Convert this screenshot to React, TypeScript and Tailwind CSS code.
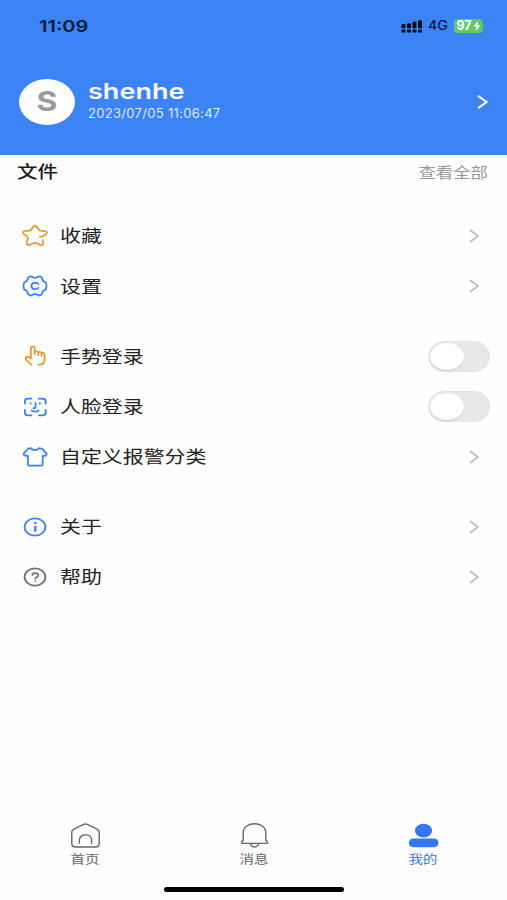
import React, { useState } from 'react';

interface IconProps {
    children: React.ReactNode;
    className?: string;
}

const RowIcon: React.FC<IconProps> = ({ children, className = 'text-[#3b82f0]' }) => (
    <svg
        viewBox="0 0 28 24"
        fill="none"
        stroke="currentColor"
        strokeWidth="1.8"
        strokeLinecap="round"
        strokeLinejoin="round"
        className={`w-7 h-6 shrink-0 ${className}`}
    >
        {children}
    </svg>
);

const StarIcon = () => (
    <RowIcon className="text-[#e59a35]">
        <path d="M18.8 12.7H21.4L24.9 10.2C26.8 8.6 26 7.4 24 7.2L19.4 6.6Q18.4 6.4 17.8 5.6L15.6 2.6Q14 0.9 12.4 2.6L10.2 5.6Q9.6 6.4 8.6 6.6L4 7.2C2 7.4 1.2 8.6 3.1 10.2L6.2 12.6Q7 13.3 6.8 14.2L5.9 18.6C5.6 20.8 6.8 21.6 8.8 20.8L13 19Q14 18.6 15 19L19.2 20.8C21.2 21.6 22.4 20.8 22.1 18.6L21.6 16.2" />
    </RowIcon>
);

const SettingsIcon = () => (
    <RowIcon>
        <path d="M10.3 2.6Q14 5.2 17.7 2.6Q19.4 2 21.1 3.8Q21 7.2 24.7 8.4Q25.5 10 25.5 12Q25.5 14 24.7 15.6Q21 16.8 21.1 19.8Q19.4 22 17.7 21.4Q14 18.8 10.3 21.4Q8.6 22 6.9 19.8Q7 16.8 3.3 15.6Q2.5 14 2.5 12Q2.5 10 3.3 8.4Q7 7.2 6.9 3.8Q8.6 2 10.3 2.6Z" />
        <path d="M17.4 10C15.5 8 10.4 8.5 10.4 12C10.4 15.5 15.5 16 17.4 14" />
    </RowIcon>
);

const HandIcon = () => (
    <RowIcon className="text-[#e59a35]">
        <path d="M10.3 20.7L5.3 16.2Q4 14 5.5 12.9Q7.1 12.2 9.9 14.5V4Q10 2.3 11.7 2.3Q13.5 2.3 13.6 4V10.2M13.6 7.7Q17.2 6.7 17.3 9V11.2M17.3 8.3Q20.5 7.2 20.6 9.8V11.8M20.6 9Q23.6 8.4 23.6 11.2V16Q23.6 20.7 17.6 20.7" />
    </RowIcon>
);

const FaceIcon = () => (
    <RowIcon>
        <path d="M10.4 3.7H7Q3.9 3.7 3.9 6.2V8.6M17.8 3.7H21Q24.7 3.7 24.7 6.2V8.6M3.9 15V17.8Q3.9 20.4 7 20.4H10.4M17.8 20.4H21Q24.7 20.4 24.7 17.8V15" />
        <path d="M9.6 8.2V8.7M18.9 8.2V8.7M14.5 8V12.1Q14.5 13.3 12.5 13.2M10.7 15.5Q14.2 17.8 17.7 15.5" />
    </RowIcon>
);

const ShirtIcon = () => (
    <RowIcon>
        <path d="M9.7 3.2Q14 6.8 18.4 3.2L21.1 3.9L25.7 8.6Q25.9 11 21.7 11V19Q21.6 20.7 19.6 20.7H9Q7 20.7 6.9 19V11Q2.4 11 2.5 8.6L7 3.9Z" />
    </RowIcon>
);

const InfoIcon = () => (
    <RowIcon>
        <ellipse cx="14" cy="12" rx="10.4" ry="8.7" />
        <path d="M14.3 10.8V16.6" strokeWidth="2.4" strokeLinecap="butt" />
        <ellipse cx="14.3" cy="8.2" rx="1.4" ry="1.1" fill="currentColor" stroke="none" />
    </RowIcon>
);

const HelpIcon = () => (
    <RowIcon className="text-[#707070]">
        <ellipse cx="14" cy="12" rx="10.4" ry="8.7" />
        <path d="M11.3 10.2C11.4 7.4 17.3 7.4 17.3 10.2C17.3 12 14.3 11.9 14.3 13.7M14.3 16V16.2" strokeWidth="1.6" />
    </RowIcon>
);

const Chevron = () => (
    <svg viewBox="0 0 10 14" fill="none" stroke="#bdbdbd" strokeWidth="1.7" className="w-2.5 h-3.5 mr-[11px]">
        <path d="M1 1L9 7L1 13" />
    </svg>
);

const Toggle = () => {
    const [on, setOn] = useState(false);

    return (
        <button
            role="switch"
            aria-checked={on}
            onClick={() => setOn(!on)}
            className={`flex items-center w-[62px] h-[31px] px-px rounded-full border border-[#e4e4e4] ${on ? 'justify-end bg-[#3c83f6]' : 'bg-[#e8e8e8]'}`}
        >
            <span className="w-[34px] h-[27px] rounded-[50%] bg-white shadow-[0_1px_2px_rgba(0,0,0,0.12)]" />
        </button>
    );
};

interface Item {
    label: string;
    icon: React.ReactNode;
    toggle?: boolean;
}

const groups: Item[][] = [
    [
        { label: '收藏', icon: <StarIcon /> },
        { label: '设置', icon: <SettingsIcon /> },
    ],
    [
        { label: '手势登录', icon: <HandIcon />, toggle: true },
        { label: '人脸登录', icon: <FaceIcon />, toggle: true },
        { label: '自定义报警分类', icon: <ShirtIcon /> },
    ],
    [
        { label: '关于', icon: <InfoIcon /> },
        { label: '帮助', icon: <HelpIcon /> },
    ],
];

const StatusBar = () => (
    <div className="flex items-center h-[52px] pl-[39px] pr-[21px] text-[#071a3c]">
        <span className="text-[16.5px] font-semibold origin-left scale-x-[1.21]">11:09</span>
        <svg viewBox="0 0 22 13" fill="currentColor" className="ml-auto w-[22px] h-[13px] text-[#050c1c]">
            <rect x="0.5" y="4" width="4" height="4.2" rx="1" />
            <rect x="6" y="3.2" width="4" height="5" rx="1" />
            <rect x="11.5" y="1.6" width="4" height="6.6" rx="1" />
            <rect x="17" y="0.2" width="4" height="8" rx="1" />
            <rect x="0.5" y="9.4" width="4" height="3.2" rx="1.2" />
            <rect x="6" y="9.4" width="4" height="3.2" rx="1.2" />
            <rect x="11.5" y="9.4" width="4" height="3.2" rx="1.2" />
            <rect x="17" y="9.4" width="4" height="3.2" rx="1.2" />
        </svg>
        <span className="ml-[5px] pt-px w-[26px] text-[12.5px] font-medium origin-left scale-x-[1.14]">4G</span>
        <div className="flex items-center justify-center gap-px w-[29px] h-[14px] rounded-[4px] bg-[#62c866] text-white">
            <span className="text-[12.5px] leading-none font-bold">97</span>
            <svg viewBox="0 0 8 10" fill="currentColor" className="w-2 h-2.5">
                <path d="M5.2 0L0.4 5.6H3.3L2.7 10L7.6 4.2H4.6Z" />
            </svg>
        </div>
        <span className="ml-px w-[2px] h-1 rounded-r-full bg-[#4c99b4]" />
    </div>
);

const tabs = [
    {
        label: '首页',
        className: 'text-[#666666]',
        icon: (
            <path d="M13.6 2.4Q15.5 1.5 17.4 2.4L27 7.2Q29.2 8.3 29.2 9.9V21.5Q29.2 25 25.5 25H5.5Q1.8 25 1.8 21.5V9.9Q1.8 8.3 4 7.2ZM9.4 21.8V18C9.4 11.2 21.6 11.2 21.6 18V21.8" />
        ),
    },
    {
        label: '消息',
        className: 'text-[#666666]',
        icon: (
            <path d="M4.2 18V10.6C4.2 -1.2 26.8 -1.2 26.8 10.6V18L28.5 20.1Q28.7 21.4 27.2 21.4H3.8Q2.3 21.4 2.5 20.1ZM11.5 21.7C12.2 26 18.8 26 19.5 21.7" />
        ),
    },
    {
        label: '我的',
        className: 'text-[#3478f0]',
        icon: (
            <g fill="currentColor" stroke="none">
                <ellipse cx="15.5" cy="8.6" rx="8.6" ry="6.9" />
                <rect x="0.8" y="16.5" width="29.6" height="8.7" rx="4.3" />
            </g>
        ),
    },
];

const App: React.FC = () => {
    return (
        <div className="flex flex-col w-[507px] h-[900px] overflow-hidden bg-[#fefefe] font-['Inter','Noto_Sans_CJK_SC',sans-serif]">
            <header className="h-[155px] shrink-0 bg-[#3c83f6]">
                <StatusBar />
                <div className="flex items-center h-[100px] pl-[19px] pr-[19px] text-white">
                    <div className="flex items-center justify-center w-14 h-[46px] rounded-[50%] bg-white">
                        <span className="text-[27px] font-bold text-[#9b9b9b] scale-x-[1.18]">S</span>
                    </div>
                    <div className="ml-[13px] -mt-[3px]">
                        <div className="text-[22px] leading-[26px] font-semibold origin-left scale-x-[1.23]">shenhe</div>
                        <div className="text-[12.5px] leading-5 tracking-[0.3px] text-white/80 origin-left scale-x-[1.04]">2023/07/05 11:06:47</div>
                    </div>
                    <svg viewBox="0 0 11 14" fill="none" stroke="currentColor" strokeWidth="2" className="ml-auto w-[11px] h-3.5">
                        <path d="M1 0.9L9.5 7L1 13.1" />
                    </svg>
                </div>
            </header>

            <div className="flex items-center justify-between h-[34px] pl-[17px] pr-[19px]">
                <h2 className="pt-0.5 text-[17px] font-medium text-[#1a1a1a] origin-left scale-x-[1.2]">文件</h2>
                <span className="pt-px text-[14.5px] text-[#999999] origin-right scale-x-[1.2]">查看全部</span>
            </div>

            <main className="flex flex-col gap-5 pt-[22px]">
                {groups.map((items, i) => (
                    <section key={i}>
                        {items.map(item => (
                            <div key={item.label} className="flex items-center h-[50.2px] pl-[21px] pr-[17px]">
                                {item.icon}
                                <span className="ml-[11px] mr-auto pt-0.5 text-[17px] text-[#222222] origin-left scale-x-[1.23]">{item.label}</span>
                                {item.toggle ? <Toggle /> : <Chevron />}
                            </div>
                        ))}
                    </section>
                ))}
            </main>

            <nav className="mt-auto grid grid-cols-3 h-[65px]">
                {tabs.map(tab => (
                    <div key={tab.label} className={`flex flex-col items-center pl-px ${tab.className}`}>
                        <svg viewBox="0 0 31 26" fill="none" stroke="currentColor" strokeWidth="1.4" strokeLinejoin="round" className="w-[31px] h-[26px]">
                            {tab.icon}
                        </svg>
                        <span className="mt-0.5 text-[12px] leading-5 scale-x-[1.2]">{tab.label}</span>
                    </div>
                ))}
            </nav>
            <div className="flex justify-center h-[13px] shrink-0">
                <div className="w-[180px] h-[5px] rounded-full bg-black" />
            </div>
        </div>
    );
};

export default App;
